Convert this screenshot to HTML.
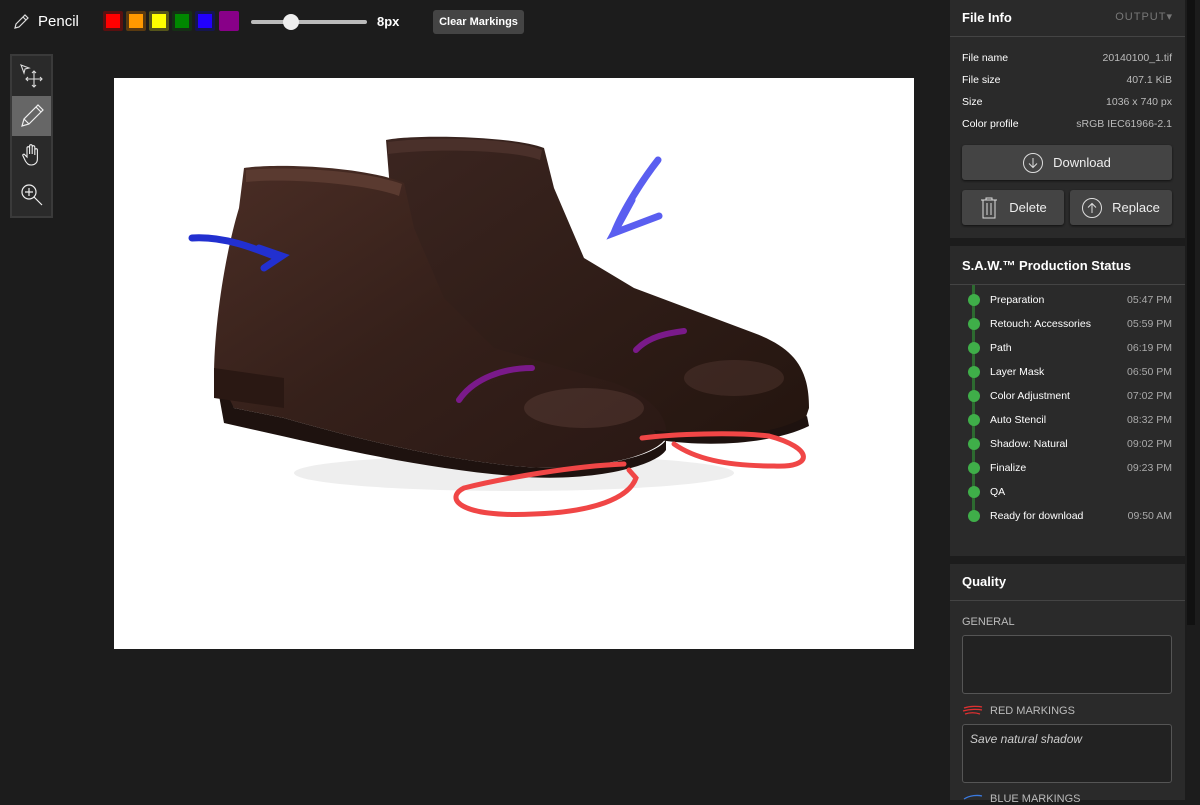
<!DOCTYPE html>
<html><head><meta charset="utf-8"><style>
*{margin:0;padding:0;box-sizing:border-box}
body{width:1200px;height:800px;background:#1c1c1c;font-family:"Liberation Sans",sans-serif;color:#fff;overflow:hidden;position:relative;font-size:11px}
.abs{position:absolute}
.sw{position:absolute;top:11px;width:20px;height:20px;border-radius:2px}
.panel{position:absolute;left:950px;width:235px;background:#2a2a2a}
.hd{font-weight:bold;font-size:13px;padding:10px 12px;border-bottom:1px solid #444;height:37px}
.row{position:absolute;left:12px;right:13px;display:flex;justify-content:space-between;font-size:10.5px}
.row span:last-child{color:#bbb}
.btn{position:absolute;background:#444;border-radius:3px;box-shadow:0 1px 2px #111;font-size:13px;display:flex;align-items:center;justify-content:center;gap:10px;color:#eee}
.circ{width:20px;height:20px;border:1px solid #ddd;border-radius:50%;display:inline-block;position:relative}
.st{position:absolute;left:40px;right:13px;display:flex;justify-content:space-between;font-size:10.5px}
.st span:last-child{color:#aaa}
.dot{position:absolute;left:18px;width:12px;height:12px;border-radius:50%;background:#3fae49}
.ta{position:absolute;left:12px;width:210px;background:#222;border:1px solid #555;border-radius:3px}
.lbl{position:absolute;left:12px;color:#bbb;font-size:11px}
</style></head><body>
<svg class="abs" style="left:12px;top:13px" width="18" height="18" viewBox="0 0 18 18"><path d="M3 15 L4 11 L13 2 L16 5 L7 14 Z M11 4 L14 7" fill="none" stroke="#ddd" stroke-width="1.2"/></svg>
<div class="abs" style="left:38px;top:13px;font-size:15px">Pencil</div>
<div class="sw" style="left:103px;background:#f00;border:3px solid #5a1010"></div>
<div class="sw" style="left:126px;background:#f90;border:3px solid #5a3a10"></div>
<div class="sw" style="left:149px;background:#ff0;border:3px solid #55551a"></div>
<div class="sw" style="left:172px;background:#080;border:3px solid #153015"></div>
<div class="sw" style="left:195px;background:#20f;border:3px solid #151550"></div>
<div class="sw" style="left:219px;background:#808;border:0"></div>
<div class="abs" style="left:251px;top:20px;width:116px;height:4px;background:#bbb;border-radius:2px"></div>
<div class="abs" style="left:283px;top:14px;width:16px;height:16px;background:#eee;border-radius:50%"></div>
<div class="abs" style="left:377px;top:14px;font-size:13px;font-weight:bold">8px</div>
<div class="abs" style="left:433px;top:10px;width:91px;height:24px;background:#444;border-radius:3px;font-size:11px;font-weight:bold;display:flex;align-items:center;justify-content:center">Clear Markings</div>
<div class="abs" style="left:10px;top:54px;width:43px;height:164px;background:#2a2a2a;border:2px solid #3a3a3a"></div>
<div class="abs" style="left:12px;top:96px;width:39px;height:40px;background:#666"></div>
<svg class="abs" style="left:19px;top:63px" width="26" height="26" viewBox="0 0 26 26" fill="none" stroke="#ddd" stroke-width="1.1"><path d="M2 2 L10 5 L6 6 L5 10 Z"/><path d="M15 8 V24 M7 16 H23 M13 10 L15 8 L17 10 M13 22 L15 24 L17 22 M9 14 L7 16 L9 18 M21 14 L23 16 L21 18"/></svg>
<svg class="abs" style="left:19px;top:103px" width="26" height="26" viewBox="0 0 26 26" fill="none" stroke="#eee" stroke-width="1.2"><path d="M3 23 L5 16 L19 2 L24 7 L10 21 Z M17 4 L22 9 M5 16 L10 21"/></svg>
<svg class="abs" style="left:20px;top:143px" width="24" height="24" viewBox="0 0 24 24" fill="none" stroke="#eee" stroke-width="1.1"><path d="M7 14 V5 a1.3 1.3 0 0 1 2.6 0 V11 V3 a1.3 1.3 0 0 1 2.6 0 V11 V4 a1.3 1.3 0 0 1 2.6 0 V12 V7 a1.3 1.3 0 0 1 2.6 0 V16 c0 4 -3 6 -6 6 c-3 0 -4 -1 -6 -4 L3 13 c-1 -1 1 -3 2 -1 Z"/></svg>
<svg class="abs" style="left:19px;top:182px" width="26" height="26" viewBox="0 0 26 26" fill="none" stroke="#eee" stroke-width="1.2"><circle cx="10" cy="10" r="7"/><path d="M10 6 V14 M6 10 H14 M15 15 L23 23"/></svg>
<svg class="abs" style="left:114px;top:78px" width="800" height="571" viewBox="0 0 800 571">
<defs><linearGradient id="g1" x1="0" y1="0" x2="1" y2="1"><stop offset="0" stop-color="#4a2d25"/><stop offset=".5" stop-color="#35201a"/><stop offset="1" stop-color="#2a1814"/></linearGradient>
<linearGradient id="g2" x1="0" y1="0" x2="1" y2="1"><stop offset="0" stop-color="#3b2520"/><stop offset="1" stop-color="#24150f"/></linearGradient></defs>
<rect width="800" height="571" fill="#fff"/>
<ellipse cx="400" cy="395" rx="220" ry="18" fill="#eee"/>
<path d="M272 62 C300 56 400 58 430 70 L440 110 L470 180 L520 210 L640 255 C680 270 695 290 695 330 L690 345 C660 360 600 362 520 355 L470 340 L380 300 L310 240 L280 160 Z" fill="url(#g2)"/>
<path d="M130 90 C160 85 250 88 290 105 L300 150 L330 220 L380 270 L500 305 C540 320 555 340 552 360 C540 380 470 395 400 388 C320 380 240 360 170 340 L120 330 L100 300 C100 250 110 180 125 130 Z" fill="url(#g1)"/>
<path d="M132 92 C170 88 250 92 288 106 L285 118 C250 105 170 100 132 104 Z" fill="#5a3a30"/>
<path d="M274 64 C320 58 400 60 428 72 L426 82 C400 72 320 70 274 76 Z" fill="#4a302a"/>
<path d="M100 290 L120 330 L170 340 C240 360 320 380 400 388 C470 395 540 380 552 362 L552 372 C540 390 470 405 400 398 C300 390 200 365 110 345 Z" fill="#1e120f"/>
<path d="M540 352 C600 362 660 358 693 338 L695 348 C660 365 600 370 545 362 Z" fill="#1e120f"/>
<path d="M100 290 L100 320 L170 330 L170 300 Z" fill="#2a1813"/>
<ellipse cx="470" cy="330" rx="60" ry="20" fill="#6b4a42" opacity=".35"/>
<ellipse cx="620" cy="300" rx="50" ry="18" fill="#6b4a42" opacity=".3"/>
<path d="M78 160 C110 158 140 170 165 180 M145 170 L168 178 L150 190" fill="none" stroke="#2230d0" stroke-width="7" stroke-linecap="round"/>
<path d="M544 82 C530 100 510 130 500 155 M518 122 L500 155 L545 138" fill="none" stroke="#5a5ef0" stroke-width="7" stroke-linecap="round"/>
<path d="M345 322 C360 300 390 290 418 290" fill="none" stroke="#7a1a8a" stroke-width="6" stroke-linecap="round"/>
<path d="M522 272 C535 258 555 255 570 253" fill="none" stroke="#7a1a8a" stroke-width="6" stroke-linecap="round"/>
<path d="M510 386 C460 388 390 400 350 410 C330 420 345 440 420 436 C480 434 515 420 522 400 L515 392" fill="none" stroke="#f04646" stroke-width="5" stroke-linecap="round"/>
<path d="M528 360 C560 356 620 354 655 358 C700 370 700 390 660 388 C610 388 580 380 560 366" fill="none" stroke="#f04646" stroke-width="5" stroke-linecap="round"/>
</svg>
<div class="abs" style="left:1187px;top:0;width:8px;height:625px;background:#111"></div>
<div class="panel" style="top:0;height:238px">
<div class="hd">File Info<span style="float:right;font-weight:normal;color:#777;font-size:11px;letter-spacing:1px">OUTPUT▾</span></div>
<div class="row" style="top:52px"><span>File name</span><span>20140100_1.tif</span></div>
<div class="row" style="top:74px"><span>File size</span><span>407.1 KiB</span></div>
<div class="row" style="top:96px"><span>Size</span><span>1036 x 740 px</span></div>
<div class="row" style="top:118px"><span>Color profile</span><span>sRGB IEC61966-2.1</span></div>
<div class="btn" style="left:12px;top:145px;width:210px;height:35px"><span class="circ"><svg width="18" height="18" viewBox="0 0 18 18" style="position:absolute;left:0;top:0"><path d="M9 4 V13 M5 9.5 L9 13.5 L13 9.5" fill="none" stroke="#ddd"/></svg></span>Download</div>
<div class="btn" style="left:12px;top:190px;width:102px;height:35px"><svg width="20" height="22" viewBox="0 0 20 22" fill="none" stroke="#ddd"><path d="M2 3 H18 M7 3 V1 H13 V3 M4 3 V21 H16 V3 M8 6 V18 M12 6 V18"/></svg>Delete</div>
<div class="btn" style="left:120px;top:190px;width:102px;height:35px"><span class="circ"><svg width="18" height="18" viewBox="0 0 18 18" style="position:absolute;left:0;top:0"><path d="M9 14 V5 M5 8.5 L9 4.5 L13 8.5" fill="none" stroke="#ddd"/></svg></span>Replace</div>
</div>
<div class="panel" style="top:246px;height:310px">
<div class="hd" style="padding-top:12px;height:39px">S.A.W.™ Production Status</div>
<div class="abs" style="left:22px;top:39px;width:3px;height:232px;background:#2d6a30"></div>
<div class="dot" style="top:48px"></div><div class="st" style="top:48px"><span>Preparation</span><span>05:47 PM</span></div>
<div class="dot" style="top:72px"></div><div class="st" style="top:72px"><span>Retouch: Accessories</span><span>05:59 PM</span></div>
<div class="dot" style="top:96px"></div><div class="st" style="top:96px"><span>Path</span><span>06:19 PM</span></div>
<div class="dot" style="top:120px"></div><div class="st" style="top:120px"><span>Layer Mask</span><span>06:50 PM</span></div>
<div class="dot" style="top:144px"></div><div class="st" style="top:144px"><span>Color Adjustment</span><span>07:02 PM</span></div>
<div class="dot" style="top:168px"></div><div class="st" style="top:168px"><span>Auto Stencil</span><span>08:32 PM</span></div>
<div class="dot" style="top:192px"></div><div class="st" style="top:192px"><span>Shadow: Natural</span><span>09:02 PM</span></div>
<div class="dot" style="top:216px"></div><div class="st" style="top:216px"><span>Finalize</span><span>09:23 PM</span></div>
<div class="dot" style="top:240px"></div><div class="st" style="top:240px"><span>QA</span><span></span></div>
<div class="dot" style="top:264px"></div><div class="st" style="top:264px"><span>Ready for download</span><span>09:50 AM</span></div>
</div>
<div class="panel" style="top:564px;height:236px">
<div class="hd" style="height:37px">Quality</div>
<div class="lbl" style="top:52px">GENERAL</div>
<div class="ta" style="top:71px;height:59px"></div>
<svg class="abs" style="left:12px;top:141px" width="22" height="12" viewBox="0 0 22 12" fill="none" stroke="#e03030" stroke-width="1.3"><path d="M2 3 C8 1 16 1 20 2 M1 6 C8 4 16 4 20 5 M3 9 C9 7 15 8 18 9"/></svg>
<div class="lbl" style="top:141px;left:40px">RED MARKINGS</div>
<div class="ta" style="top:160px;height:59px;padding:7px;color:#ccc;font-style:italic;font-size:12px">Save natural shadow</div>
<svg class="abs" style="left:12px;top:229px" width="22" height="8" viewBox="0 0 22 8" fill="none" stroke="#3a7ae0" stroke-width="1.3"><path d="M2 6 C8 2 16 2 20 3"/></svg>
<div class="lbl" style="top:229px;left:40px">BLUE MARKINGS</div>
</div>
</body></html>
